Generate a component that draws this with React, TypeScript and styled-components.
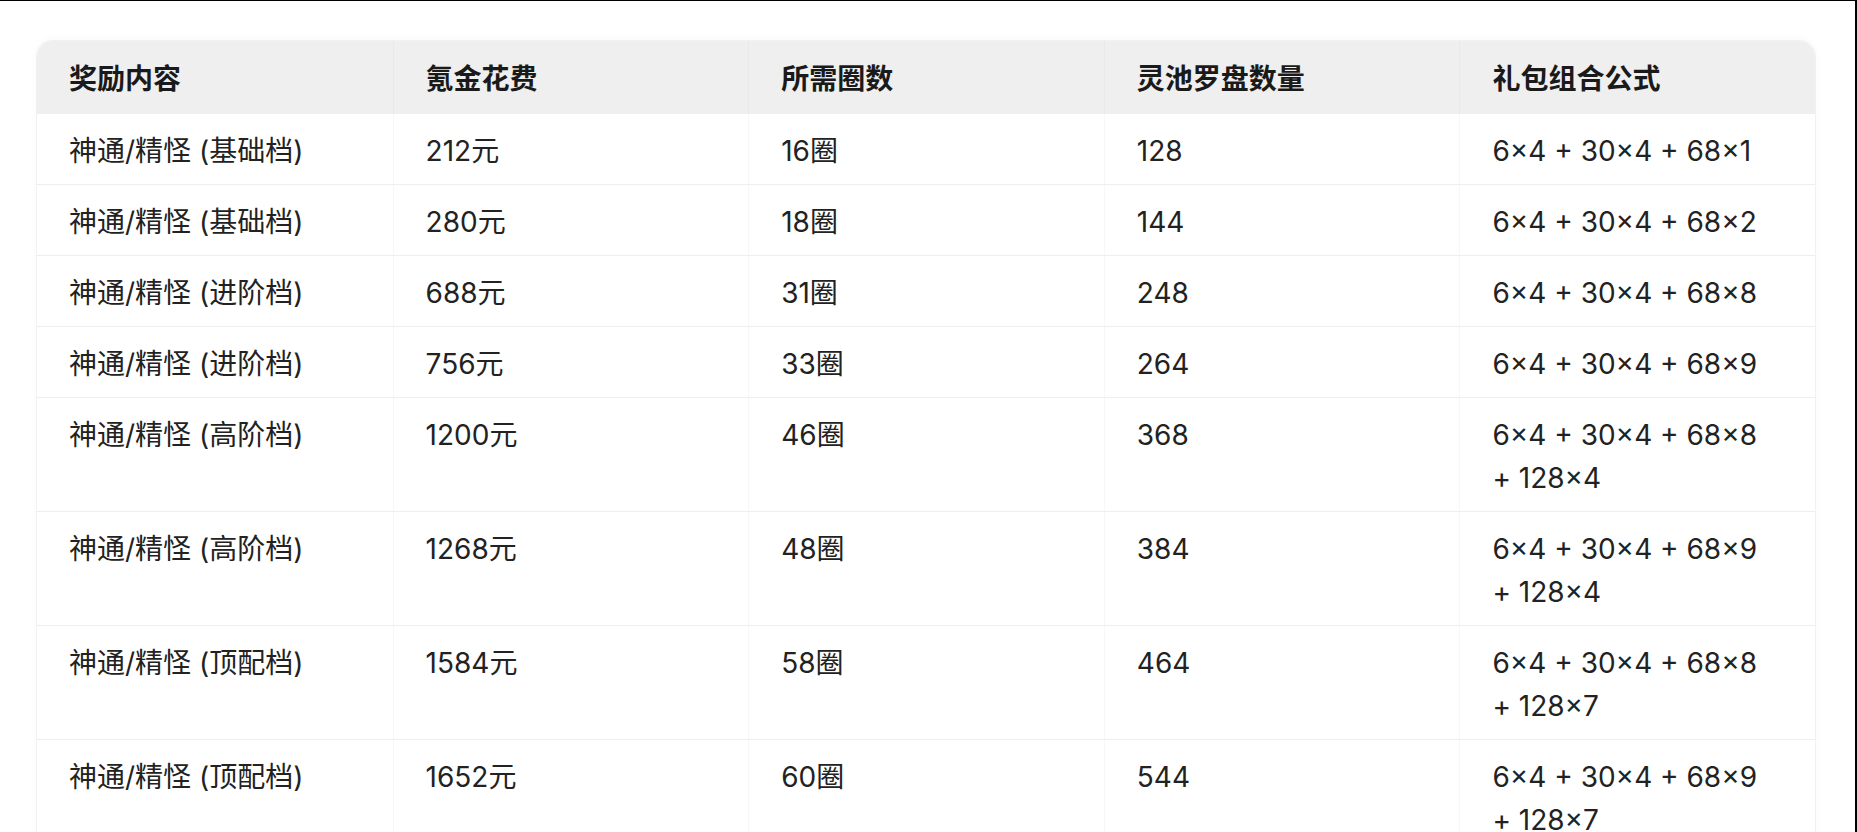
import styled, { createGlobalStyle } from "styled-components";

const GlobalStyle = createGlobalStyle`
  html, body {
    margin: 0;
    padding: 0;
    background: #ffffff;
  }
  body {
    font-family: Inter, "Noto Sans CJK SC", sans-serif;
    color: #1f1f1f;
  }
`;

// --- estilos ---
const Page = styled.div`
  box-sizing: border-box;
  width: 1857px;
  height: 832px;
  overflow: hidden;
  border-top: 1px solid #000;
  border-right: 2px solid #000;
  padding: 40px 40px 0 37px;
  background: #fff;
`;

const Table = styled.div`
  border-radius: 16px 16px 0 0;
  overflow: hidden;
  background: #fff;
  box-shadow: 0 0 0 1px #f1f1f1, 0 -2px 8px rgba(0, 0, 0, 0.03);
`;

const Row = styled.div<{ $head?: boolean }>`
  display: grid;
  grid-template-columns: repeat(5, 1fr);
  background: ${(p) => (p.$head ? "#efefef" : "#fff")};
  border-top: ${(p) => (p.$head ? "none" : "1px solid #eeeeee")};
`;

const Cell = styled.div<{ $head?: boolean }>`
  padding: ${(p) => (p.$head ? "17px 30px 12px 32px" : "16px 30px 11px 32px")};
  font-size: 28px;
  line-height: 43px;
  font-weight: ${(p) => (p.$head ? 600 : 400)};
  color: ${(p) => (p.$head ? "#1a1a1a" : "#222")};
  border-left: 1px solid ${(p) => (p.$head ? "#e9e9e9" : "#f7f7f7")};
  &:first-child {
    border-left: none;
  }
`;

// el "+" del final pasa a la segunda línea junto al 128×n
const nb = "\u00a0";

const headers = ["奖励内容", "氪金花费", "所需圈数", "灵池罗盘数量", "礼包组合公式"];

const rows = [
  ["神通/精怪 (基础档)", "212元", "16圈", "128", "6×4 + 30×4 + 68×1"],
  ["神通/精怪 (基础档)", "280元", "18圈", "144", "6×4 + 30×4 + 68×2"],
  ["神通/精怪 (进阶档)", "688元", "31圈", "248", "6×4 + 30×4 + 68×8"],
  ["神通/精怪 (进阶档)", "756元", "33圈", "264", "6×4 + 30×4 + 68×9"],
  ["神通/精怪 (高阶档)", "1200元", "46圈", "368", `6×4 + 30×4 + 68×8 +${nb}128×4`],
  ["神通/精怪 (高阶档)", "1268元", "48圈", "384", `6×4 + 30×4 + 68×9 +${nb}128×4`],
  ["神通/精怪 (顶配档)", "1584元", "58圈", "464", `6×4 + 30×4 + 68×8 +${nb}128×7`],
  ["神通/精怪 (顶配档)", "1652元", "60圈", "544", `6×4 + 30×4 + 68×9 +${nb}128×7`],
];

export default function App() {
  return (
    <>
      <GlobalStyle />
      <Page>
        <Table>
          <Row $head>
            {headers.map((h) => (
              <Cell $head key={h}>{h}</Cell>
            ))}
          </Row>
          {rows.map((r, i) => (
            <Row key={i}>
              {r.map((c, j) => (
                <Cell key={j}>{c}</Cell>
              ))}
            </Row>
          ))}
        </Table>
      </Page>
    </>
  );
}
